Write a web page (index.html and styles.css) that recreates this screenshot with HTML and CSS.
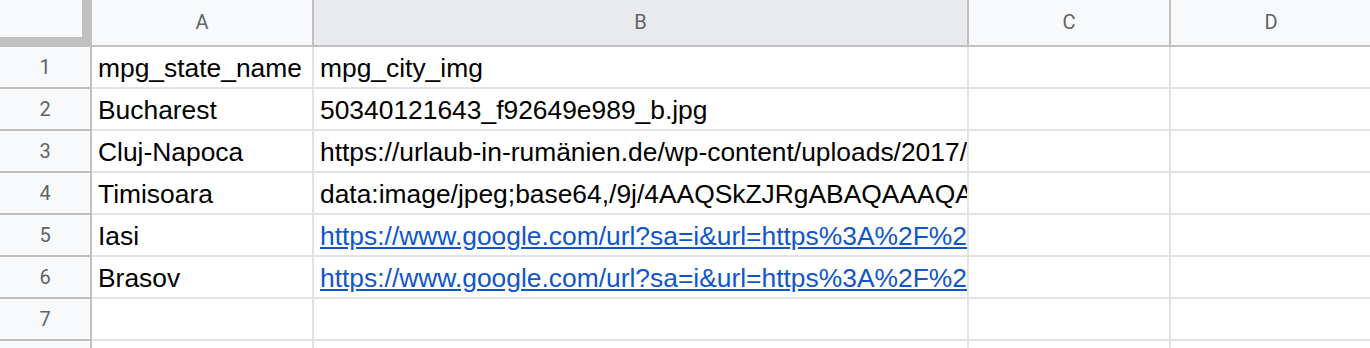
FILE: index.html
```html
<!DOCTYPE html>
<html>
<head>
<meta charset="utf-8">
<link rel="stylesheet" href="styles.css">
</head>
<body>
<div class="sheet">
  <div class="corner"></div>
  <div class="colhead">A</div>
  <div class="colhead sel">B</div>
  <div class="colhead">C</div>
  <div class="colhead">D</div>

  <div class="rowhead">1</div>
  <div class="cell">mpg_state_name</div>
  <div class="cell">mpg_city_img</div>
  <div class="cell"></div>
  <div class="cell"></div>

  <div class="rowhead">2</div>
  <div class="cell">Bucharest</div>
  <div class="cell">50340121643_f92649e989_b.jpg</div>
  <div class="cell"></div>
  <div class="cell"></div>

  <div class="rowhead">3</div>
  <div class="cell">Cluj-Napoca</div>
  <div class="cell">https://urlaub-in-rumänien.de/wp-content/uploads/2017/06/cluj-napoca.jpg</div>
  <div class="cell"></div>
  <div class="cell"></div>

  <div class="rowhead">4</div>
  <div class="cell">Timisoara</div>
  <div class="cell">data:image/jpeg;base64,/9j/4AAQSkZJRgABAQAAAQABAAD/2wCEAAkGBxMTEhUTExMWFhUXGBgYGBcYGBgYGBgYGBgXGBgXGBgY</div>
  <div class="cell"></div>
  <div class="cell"></div>

  <div class="rowhead">5</div>
  <div class="cell">Iasi</div>
  <div class="cell"><a class="link" href="#">https://www.google.com/url?sa=i&amp;url=https%3A%2F%2Fwww.romania-insider.com%2Fiasi</a></div>
  <div class="cell"></div>
  <div class="cell"></div>

  <div class="rowhead">6</div>
  <div class="cell">Brasov</div>
  <div class="cell"><a class="link" href="#">https://www.google.com/url?sa=i&amp;url=https%3A%2F%2Fwww.romania-insider.com%2Fbrasov</a></div>
  <div class="cell"></div>
  <div class="cell"></div>

  <div class="rowhead">7</div>
  <div class="cell"></div>
  <div class="cell"></div>
  <div class="cell"></div>
  <div class="cell"></div>

  <div class="rowhead">8</div>
  <div class="cell"></div>
  <div class="cell"></div>
  <div class="cell"></div>
  <div class="cell"></div>
</div>
</body>
</html>
```
FILE: styles.css
```css
html, body {
  margin: 0;
  padding: 0;
  background: #ffffff;
  overflow: hidden;
}

.sheet {
  display: grid;
  grid-template-columns: 92px 222px 655px 202px 202px;
  grid-template-rows: 47px;
  grid-auto-rows: 42px;
  width: 1373px;
}

.sheet > div {
  box-sizing: border-box;
  overflow: hidden;
  white-space: nowrap;
}

.corner {
  background: #f8f9fa;
  border-right: 10px solid #c0c0c0;
  border-bottom: 10px solid #c0c0c0;
}

.colhead {
  background: #f8f9fa;
  border-right: 2px solid #c0c0c0;
  border-bottom: 2px solid #c0c0c0;
  font-family: Roboto, "Liberation Sans", sans-serif;
  font-size: 20px;
  color: #5f6368;
  text-align: center;
  line-height: 45px;
}

.colhead.sel {
  background: #e8eaed;
}

.rowhead {
  background: #f8f9fa;
  border-right: 2px solid #c0c0c0;
  border-bottom: 2px solid #c0c0c0;
  font-family: Roboto, "Liberation Sans", sans-serif;
  font-size: 20px;
  color: #5f6368;
  text-align: center;
  line-height: 40px;
}

.cell {
  border-right: 2px solid #e2e2e2;
  border-bottom: 2px solid #e2e2e2;
  font-family: "Liberation Sans", Arial, sans-serif;
  font-size: 26.4px;
  color: #000000;
  line-height: 30px;
  padding: 6px 6px 0 6px;
}

.link {
  color: #1155cc;
  text-decoration: underline;
}
```
